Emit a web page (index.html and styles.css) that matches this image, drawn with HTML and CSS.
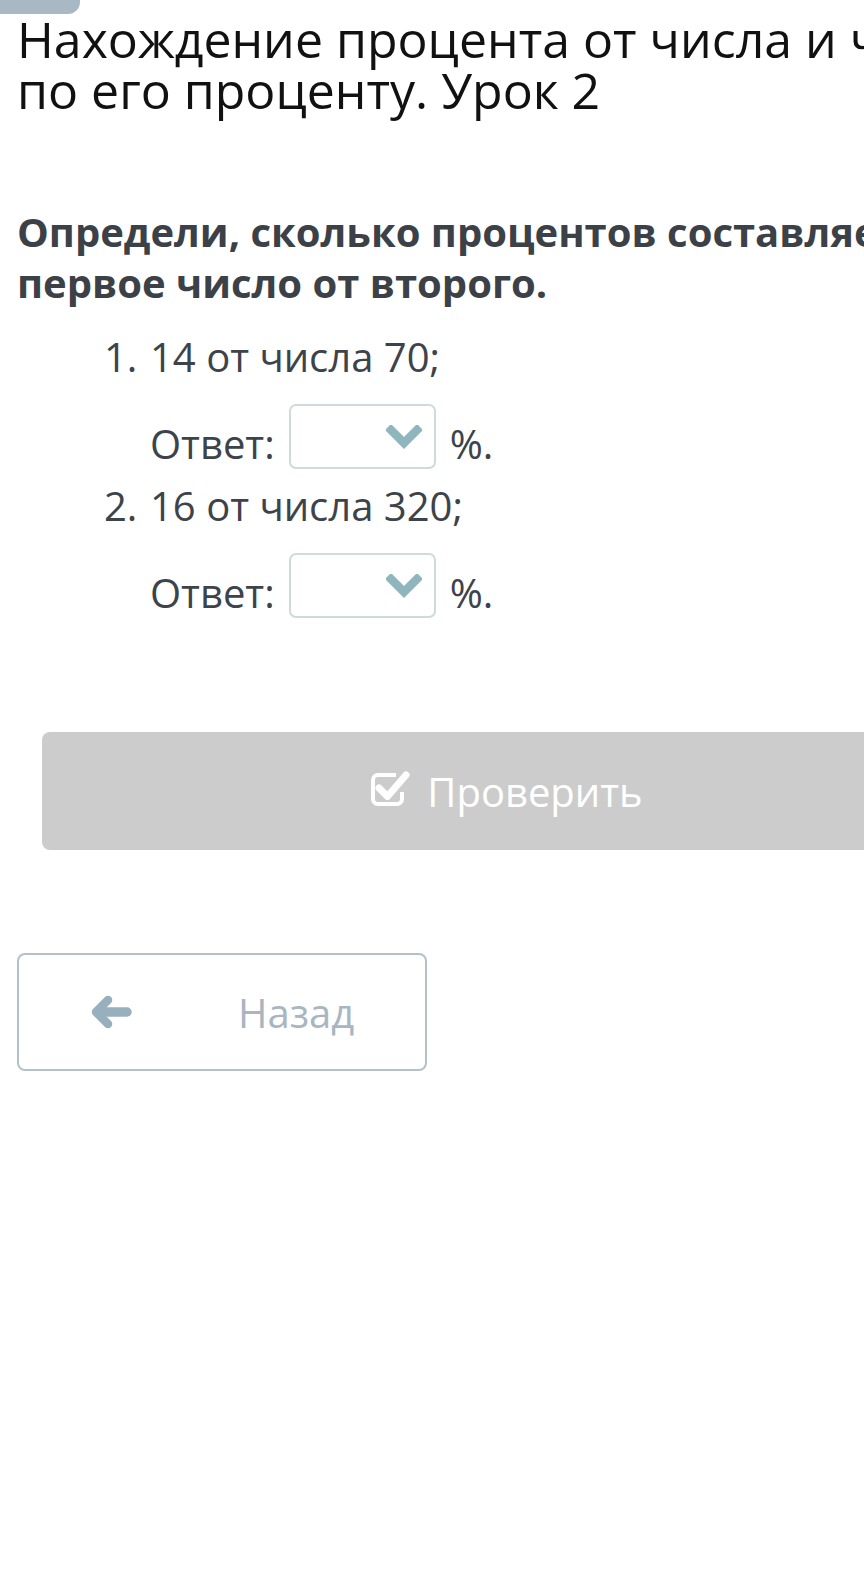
FILE: index.html
```html
<!DOCTYPE html>
<html lang="ru">
<head>
<meta charset="utf-8">
<title>Нахождение процента от числа</title>
<link rel="stylesheet" href="styles.css">
</head>
<body>
<div class="tab"></div>
<main class="page">
  <h1 class="title">Нахождение процента от числа и числа<br>по его проценту. Урок 2</h1>
  <p class="question">Определи, сколько процентов составляет<br>первое число от второго.</p>
  <ol class="items">
    <li class="item">
      <div class="item-line"><span class="num">1.</span><span>14 от числа 70;</span></div>
      <div class="answer">
        <span class="answer-label">Ответ:</span>
        <span class="select"><svg class="chev" width="36" height="24" viewBox="0 0 36 24"><path d="M5 5 L18 18 L31 5" fill="none" stroke="#8fb5bd" stroke-width="8.5" stroke-linecap="square" stroke-linejoin="miter"/></svg></span>
        <span class="answer-label">%.</span>
      </div>
    </li>
    <li class="item">
      <div class="item-line"><span class="num">2.</span><span>16 от числа 320;</span></div>
      <div class="answer">
        <span class="answer-label">Ответ:</span>
        <span class="select"><svg class="chev" width="36" height="24" viewBox="0 0 36 24"><path d="M5 5 L18 18 L31 5" fill="none" stroke="#8fb5bd" stroke-width="8.5" stroke-linecap="square" stroke-linejoin="miter"/></svg></span>
        <span class="answer-label">%.</span>
      </div>
    </li>
  </ol>
  <button class="check-btn" type="button">
    <svg class="check-icon" width="42" height="38" viewBox="0 0 42 38"><path d="M27 5 H9 a5 5 0 0 0 -5 5 V29 a5 5 0 0 0 5 5 H28 a5 5 0 0 0 5 -5 V22" fill="none" stroke="#fff" stroke-width="4"/><path d="M10 18 L18.5 26.5 L37 5" fill="none" stroke="#fff" stroke-width="7" stroke-linecap="round" stroke-linejoin="round"/></svg>
    <span>Проверить</span>
  </button>
  <button class="back-btn" type="button">
    <svg class="back-icon" width="42" height="34" viewBox="0 0 42 34"><path d="M18 5 L6 17 L18 29" fill="none" stroke="#98b0bd" stroke-width="8.5" stroke-linecap="round" stroke-linejoin="round"/><path d="M8 17 H37" fill="none" stroke="#98b0bd" stroke-width="9.5" stroke-linecap="round"/></svg>
    <span class="back-text">Назад</span>
  </button>
</main>
</body>
</html>
```
FILE: styles.css
```css
html, body {
  margin: 0;
  padding: 0;
  background: #fff;
  overflow: hidden;
}
body {
  font-family: "Open Sans", "DejaVu Sans", sans-serif;
  width: 864px;
  height: 1584px;
}
.tab {
  width: 80px;
  height: 14px;
  background: #a8b9c5;
  border-bottom-right-radius: 12px;
}
.page {
  padding-left: 17px;
  width: 1000px;
}
.title {
  margin: 0;
  font-size: 50px;
  line-height: 51px;
  font-weight: 400;
  color: #111;
  white-space: nowrap;
}
.question {
  margin: 90px 0 0 0;
  font-size: 40px;
  line-height: 51px;
  font-weight: 700;
  color: #3c4148;
  white-space: nowrap;
}
.items {
  list-style: none;
  margin: 24px 0 0 0;
  padding: 0 0 0 87px;
  color: #3d434a;
  font-size: 40px;
}
.item-line {
  display: flex;
  line-height: 50px;
  white-space: nowrap;
}
.num {
  width: 46px;
}
.answer {
  display: flex;
  align-items: flex-end;
  gap: 14px;
  margin: 22px 0 12px 46px;
  height: 65px;
}
.answer-label {
  line-height: 50px;
}
.select {
  box-sizing: border-box;
  width: 147px;
  height: 65px;
  border: 2px solid #cfdadd;
  border-radius: 7px;
  display: flex;
  align-items: center;
  justify-content: flex-end;
  padding-right: 12px;
}
.check-btn {
  display: flex;
  align-items: center;
  justify-content: center;
  gap: 16px;
  margin: 114px 0 0 25px;
  width: 928px;
  height: 118px;
  border: none;
  border-radius: 8px;
  background: #cccccc;
  color: #fff;
  font-family: "Open Sans", "DejaVu Sans", sans-serif;
  font-size: 40px;
  padding: 0;
}
.check-icon {
  margin-top: -4px;
}
.back-btn {
  box-sizing: border-box;
  display: flex;
  align-items: center;
  margin: 103px 0 0 0;
  width: 410px;
  height: 118px;
  border: 2px solid #b3c2ca;
  border-radius: 8px;
  background: #fff;
  padding: 0 0 0 71px;
  font-family: "Open Sans", "DejaVu Sans", sans-serif;
  font-size: 40px;
  color: #a7b6bf;
}
.back-text {
  margin-left: 106px;
}
```
